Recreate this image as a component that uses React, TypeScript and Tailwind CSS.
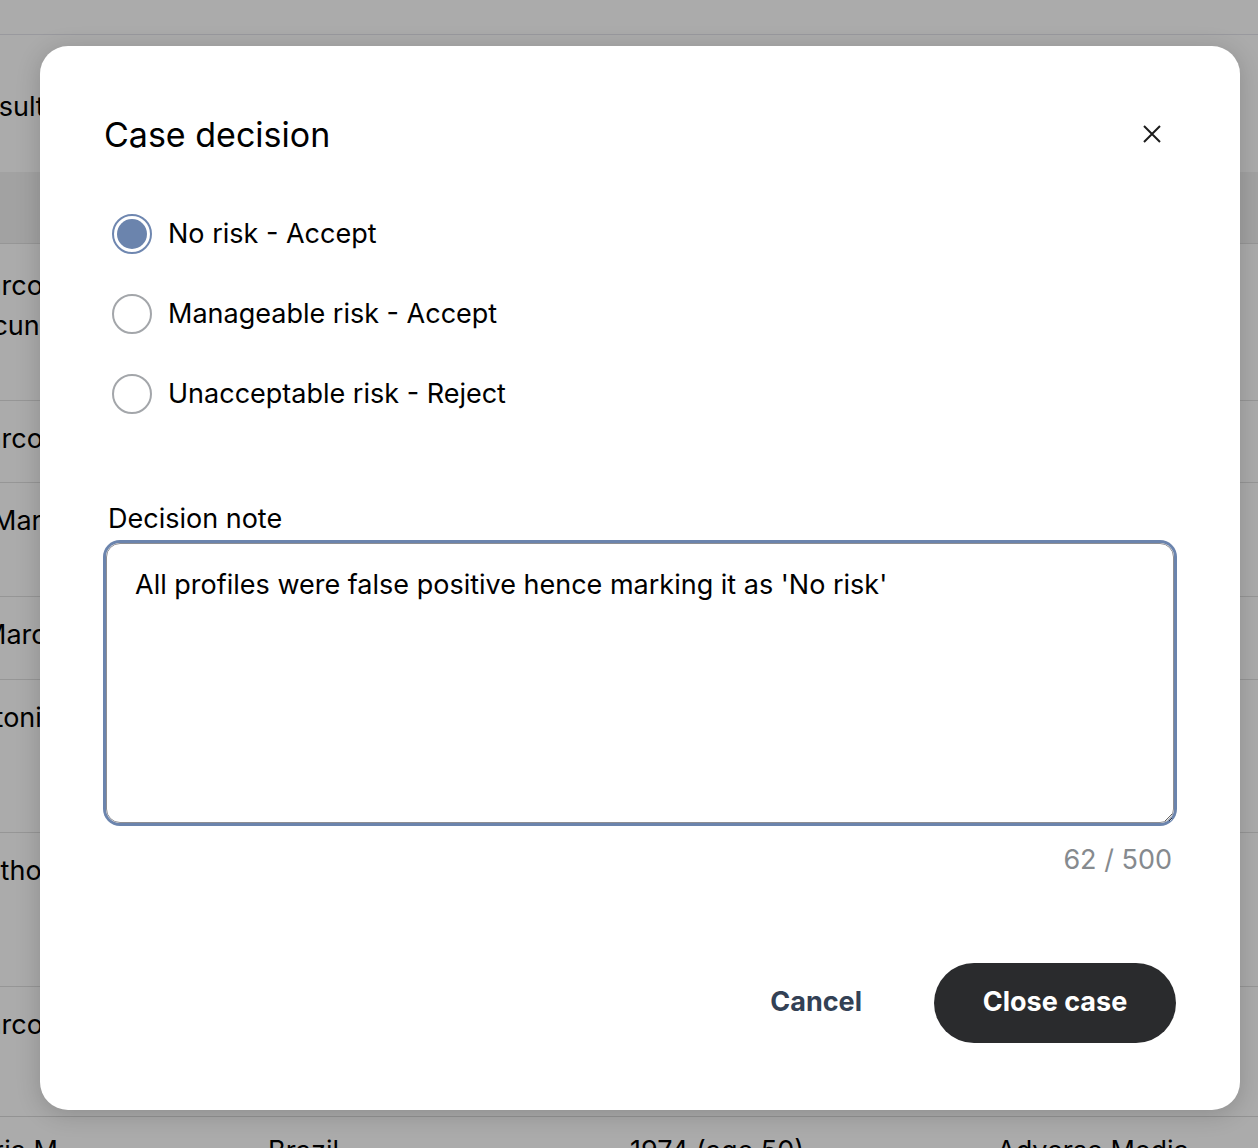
import React, { useState } from "react";

const options = [
  { id: "none", label: "No risk - Accept" },
  { id: "manageable", label: "Manageable risk - Accept" },
  { id: "unacceptable", label: "Unacceptable risk - Reject" },
];

// rows of the results table behind the dialog
const rows = [
  { h: "h-[157px]", lines: ["Marcos Andrade", "Facundo Santos"], cls: "pt-[22px] -ml-[38px]" },
  { h: "h-[82px]", lines: ["Marcos Silva"], cls: "pt-[18px] -ml-[38px]" },
  { h: "h-[114px]", lines: ["Marcos Pereira"], cls: "pt-[18px] -ml-[8px]" },
  { h: "h-[83px]", lines: ["Marcos Lima"], cls: "pt-[18px] -ml-[18px]" },
  { h: "h-[153px]", lines: ["Antonia Souza"], cls: "pt-[18px] -ml-[40px]" },
  { h: "h-[154px]", lines: ["Anthony Costa"], cls: "pt-[18px] -ml-[34px]" },
  { h: "h-[130px]", lines: ["Marcos Rocha"], cls: "pt-[18px] -ml-[38px]" },
];

const RadioOption: React.FC<{ label: string; checked: boolean; onSelect: () => void }> = ({
  label,
  checked,
  onSelect,
}) => (
  <label className="flex items-center gap-4 h-[80px] cursor-pointer" onClick={onSelect}>
    {checked ? (
      <span className="w-10 h-10 rounded-full border-2 border-[#6f87b0] flex items-center justify-center">
        <span className="w-[30px] h-[30px] rounded-full bg-[#6b84ad]" />
      </span>
    ) : (
      <span className="w-10 h-10 rounded-full border-2 border-[#a3a6aa]" />
    )}
    <span className="text-[27px] text-black">{label}</span>
  </label>
);

export default function App() {
  const [choice, setChoice] = useState("none");
  const note = "All profiles were false positive hence marking it as 'No risk'";

  return (
    <div
      className="relative h-[1148px] overflow-hidden bg-white text-black"
      style={{ fontFamily: "Inter, 'Noto Sans', sans-serif" }}
    >
      {/* page behind */}
      <div className="flex flex-col text-[27px]">
        <div className="h-[35px] border-b border-[#e4e4ec]" />
        <div className="h-[137px] flex items-center pt-[8px] -ml-[34px]">Results</div>
        <div className="h-[71px] bg-[#f2f2f2]" />
        {rows.map((r, i) => (
          <div key={i} className={`${r.h} ${r.cls} border-t border-[#e0e0e0] leading-[40px]`}>
            {r.lines.map((l) => (
              <div key={l}>{l}</div>
            ))}
          </div>
        ))}
        <div className="border-t border-[#dcdcdc] pt-[14px] flex items-start">
          <span className="w-[268px] -ml-[46px] pl-0">Maria M</span>
          <span className="w-[362px] ml-[46px]">Brazil</span>
          <span className="w-[367px]">1974 (age 50)</span>
          <span>Adverse Media</span>
        </div>
      </div>

      {/* overlay */}
      <div className="absolute inset-0 bg-[#000000]/[0.33]" />

      {/* dialog */}
      <div className="absolute left-[40px] top-[46px] w-[1200px] h-[1064px] bg-white rounded-[28px] shadow-[0_4px_24px_rgba(0,0,0,0.18)] pl-[64px] pr-[64px] pt-[64px] flex flex-col">
        <div className="flex items-center justify-between h-[48px]">
          <h2 className="text-[34px] text-black font-normal">Case decision</h2>
          <button className="w-9 h-9 flex items-center justify-center mr-[6px]">
            <svg width="20" height="20" viewBox="0 0 20 20" fill="none" stroke="#1c1c1c" strokeWidth="2">
              <path d="M2 2L18 18M18 2L2 18" />
            </svg>
          </button>
        </div>

        <div className="mt-[36px] ml-[8px] flex flex-col">
          {options.map((o) => (
            <RadioOption
              key={o.id}
              label={o.label}
              checked={choice === o.id}
              onSelect={() => setChoice(o.id)}
            />
          ))}
        </div>

        <div className="mt-[69px] flex flex-col pr-[2px] pl-[2px]">
          <label className="text-[27px] ml-[2px] leading-[32px] text-black">Decision note</label>
          <textarea
            className="mt-[8px] h-[280px] rounded-[14px] border border-[#8e8e93] ring-[3px] ring-[#6b84ad] outline-none px-[28px] py-[24px] text-[27px] leading-[34px] text-black resize-y"
            defaultValue={note}
          />
          <div className="mt-[17px] text-right text-[27px] text-[#868a8e] pr-[2px]">
            {note.length} / 500
          </div>
        </div>

        <div className="mt-[82px] flex items-center justify-end gap-[72px]">
          <button className="text-[27px] font-bold text-[#334155]">Cancel</button>
          <button className="h-[80px] w-[242px] rounded-full bg-[#2a2b2d] text-white text-[27px] font-bold">
            Close case
          </button>
        </div>
      </div>
    </div>
  );
}
